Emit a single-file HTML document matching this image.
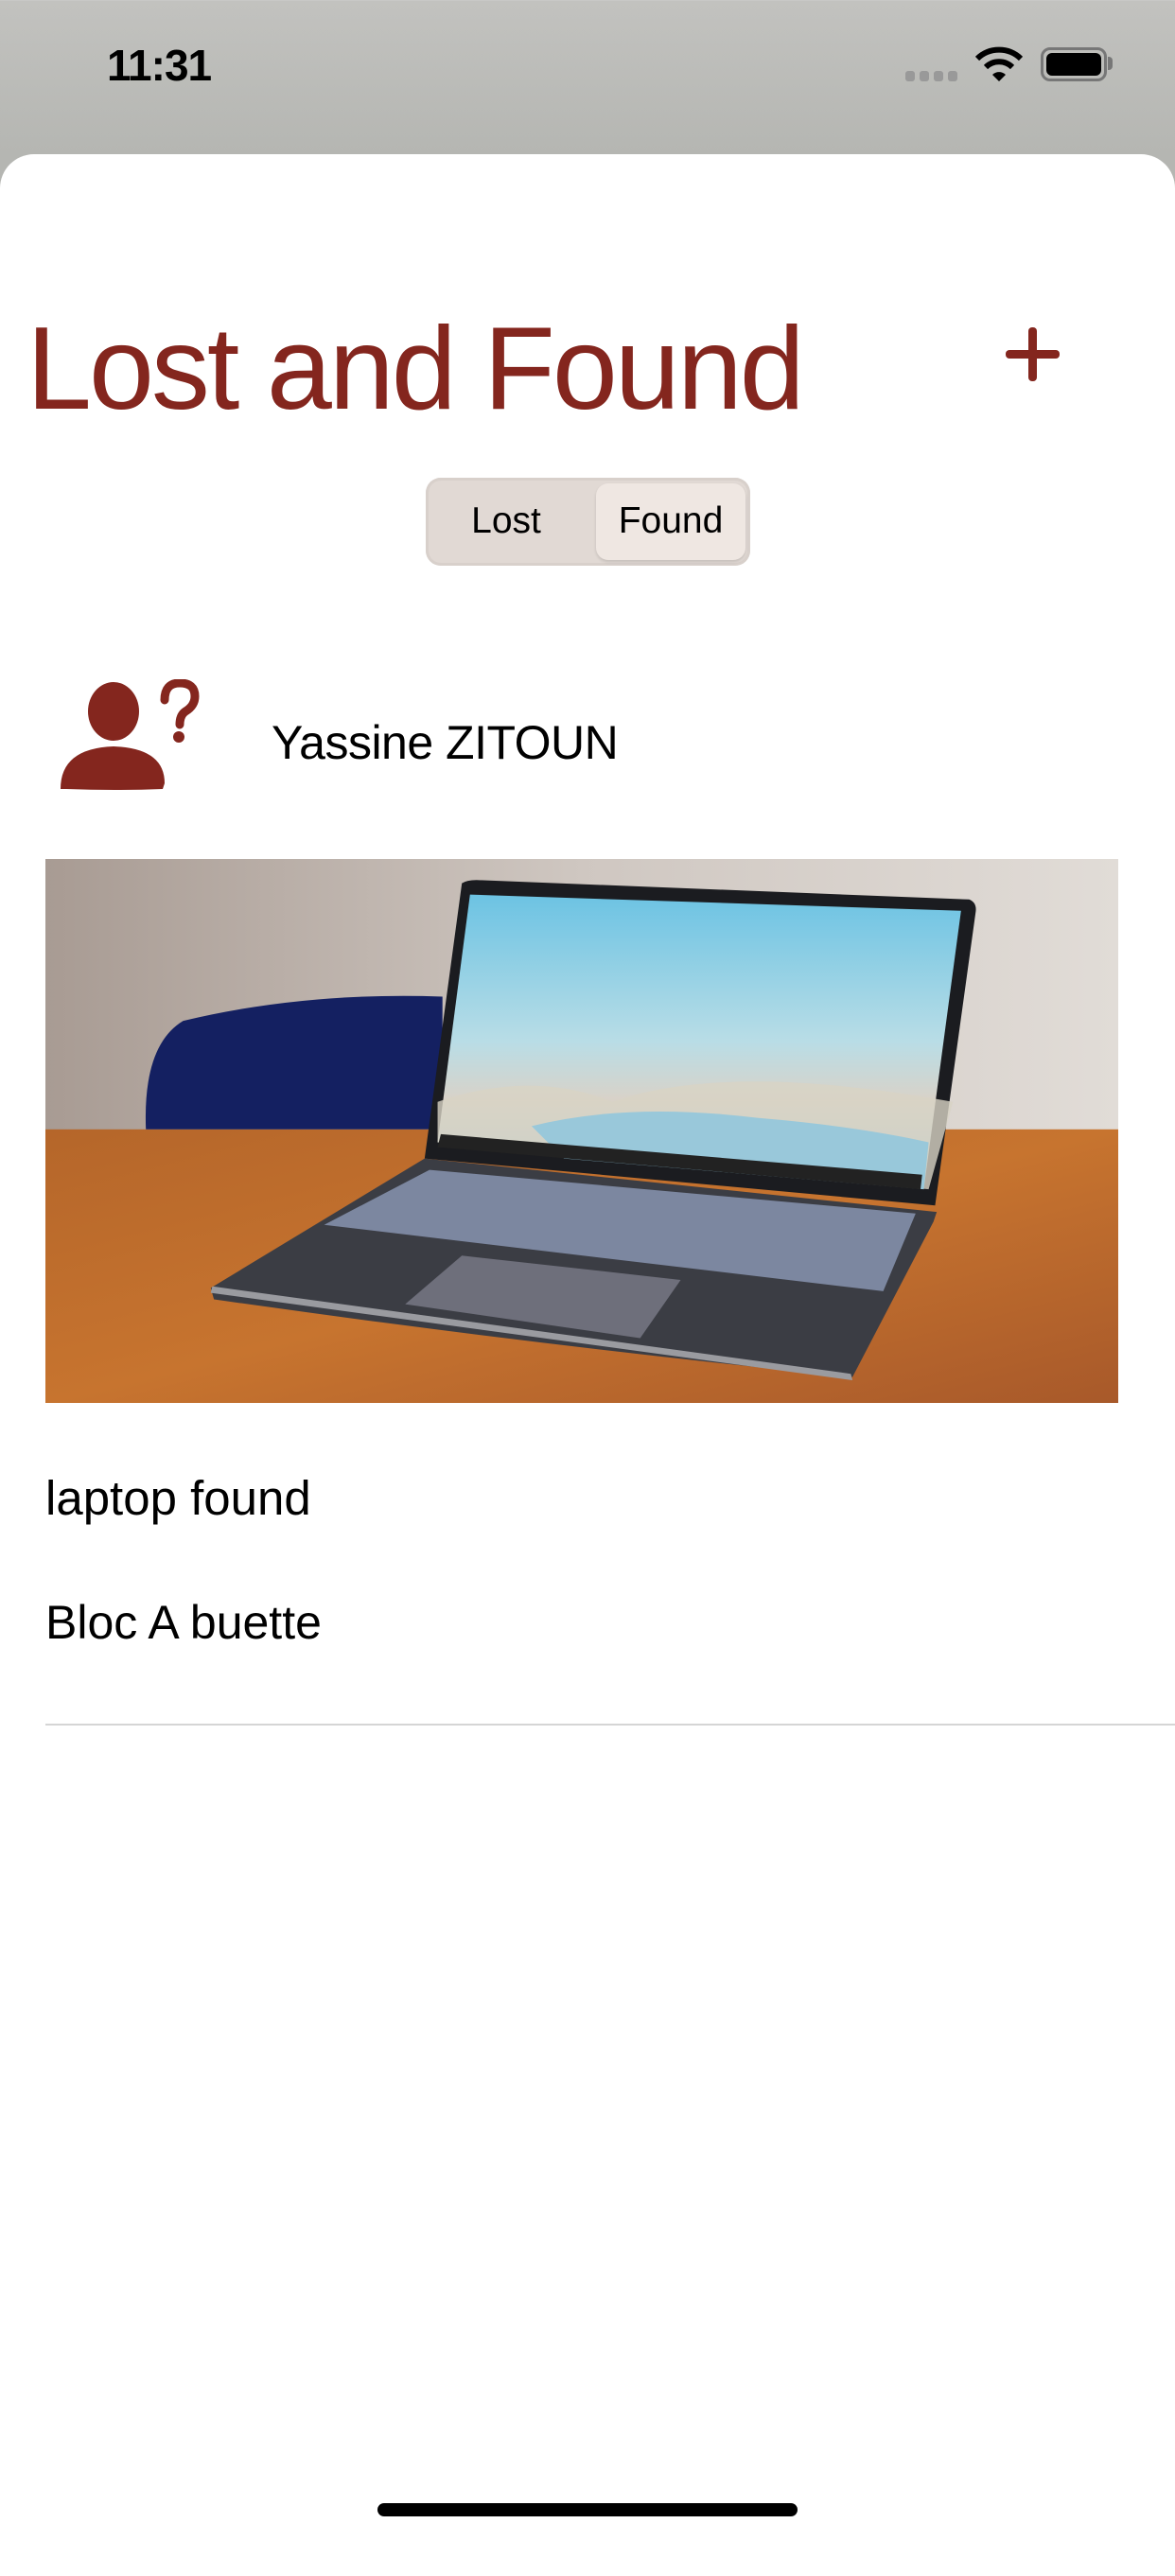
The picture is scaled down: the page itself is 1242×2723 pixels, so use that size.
<!DOCTYPE html>
<html><head><meta charset="utf-8"><style>
html,body{margin:0;padding:0;}
body{width:1242px;height:2688px;position:relative;overflow:hidden;background:linear-gradient(#c2c2bf,#b5b6b2 163px,#b5b6b2 220px,#fff 220px);font-family:"Liberation Sans",sans-serif;}
.abs{position:absolute;}
.sheet{left:0;top:163px;width:1242px;height:2560px;background:#fff;border-radius:36px 36px 0 0;}
</style></head><body>
<div class="abs" style="left:113px;top:42px;font-size:46px;font-weight:bold;letter-spacing:-1px;color:#000;">11:31</div>
<div class="abs" style="left:957px;top:75px;display:flex;gap:5px;">
<div style="width:10px;height:11px;border-radius:3px;background:#999"></div><div style="width:10px;height:11px;border-radius:3px;background:#999"></div><div style="width:10px;height:11px;border-radius:3px;background:#999"></div><div style="width:10px;height:11px;border-radius:3px;background:#999"></div></div>
<svg class="abs" style="left:1030px;top:48px" width="52" height="40" viewBox="0 0 52 40">
<path d="M3 14 A33 33 0 0 1 49 14" stroke="#000" stroke-width="6" fill="none"/>
<path d="M12 23 A20 20 0 0 1 40 23" stroke="#000" stroke-width="6" fill="none"/>
<path d="M19 31 L26 38 L33 31 A10 10 0 0 0 19 31Z" fill="#000"/></svg>
<div class="abs" style="left:1100px;top:50px;width:64px;height:30px;border:3px solid #777;border-radius:10px;"></div>
<div class="abs" style="left:1106px;top:56px;width:58px;height:24px;background:#000;border-radius:6px;"></div>
<div class="abs" style="left:1171px;top:60px;width:5px;height:14px;background:#777;border-radius:0 4px 4px 0;"></div>
<div class="abs sheet"></div>
<div class="abs" style="left:28px;top:328px;font-size:124px;color:#84261e;letter-spacing:-3px;line-height:1;white-space:nowrap;">Lost and Found</div>
<div class="abs" style="left:1063px;top:370px;width:57px;height:9px;background:#84261e;border-radius:4px;"></div>
<div class="abs" style="left:1087px;top:346px;width:9px;height:57px;background:#84261e;border-radius:4px;"></div>
<div class="abs" style="left:450px;top:505px;width:343px;height:93px;background:#e1d9d4;border-radius:16px;box-shadow:inset 0 0 0 3px #d8d0cb;"></div>
<div class="abs" style="left:630px;top:511px;width:158px;height:81px;background:#efe7e2;border-radius:13px;box-shadow:0 2px 3px rgba(0,0,0,.12);"></div>
<div class="abs" style="left:445px;top:529px;width:180px;text-align:center;font-size:39px;color:#000;">Lost</div>
<div class="abs" style="left:630px;top:529px;width:158px;text-align:center;font-size:39px;color:#000;">Found</div>
<svg class="abs" style="left:62px;top:718px" width="150" height="120" viewBox="0 0 150 120">
<ellipse cx="58" cy="34" rx="27" ry="31" fill="#84261e"/>
<path d="M2 116 Q2 73 58 71 Q112 73 112 110 L110 116 Q60 118 8 116 Z" fill="#84261e"/>
<path d="M112 22 Q112 4 128 4 Q144 4 144 18 Q144 28 134 34 Q128 38 128 48" stroke="#84261e" stroke-width="9" fill="none" stroke-linecap="round"/>
<circle cx="127" cy="61" r="6" fill="#84261e"/></svg>
<div class="abs" style="left:287px;top:756px;font-size:50px;color:#000;letter-spacing:-0.5px;">Yassine ZITOUN</div>
<svg class="abs" style="left:48px;top:908px" width="1134" height="575" viewBox="0 0 662 336" preserveAspectRatio="none">
<defs>
<linearGradient id="wall" x1="0" x2="1"><stop offset="0" stop-color="#a89b93"/><stop offset=".5" stop-color="#cfc7c1"/><stop offset="1" stop-color="#e1dcd7"/></linearGradient>
<linearGradient id="wood" x1="0" y1="0" x2="1" y2="1"><stop offset="0" stop-color="#b5662a"/><stop offset=".5" stop-color="#c7742f"/><stop offset="1" stop-color="#a8592a"/></linearGradient>
<linearGradient id="scr" x1="0" y1="0" x2="0" y2="1"><stop offset="0" stop-color="#6cc3e3"/><stop offset=".5" stop-color="#b9dde6"/><stop offset=".7" stop-color="#d9d2c8"/><stop offset="1" stop-color="#8fc7dd"/></linearGradient>
</defs>
<rect width="662" height="168" fill="url(#wall)"/>
<rect y="167" width="662" height="169" fill="url(#wood)"/>
<path d="M62 167 Q60 115 85 100 Q160 82 245 85 L245 167Z" fill="#142061"/>
<path d="M257 15 Q260 13 266 13 L570 25 Q575 27 574 33 L549 214 L234 185 Z" fill="#1b1c20"/>
<path d="M262 22 L565 32 L542 204 L242 175 Z" fill="url(#scr)"/>
<path d="M242 150 Q300 130 350 150 Q420 125 560 150 L545 204 L242 175 Z" fill="#d8d3c4" opacity=".8"/>
<path d="M300 165 Q360 150 440 160 Q500 165 545 175 L542 204 L320 185 Z" fill="#92c7dc" opacity=".9"/>
<path d="M244 170 L541 195 L540 204 L242 178Z" fill="#222"/>
<path d="M234 185 L550 218 L548 224 L498 320 Q300 300 104 272 L102 265 Z" fill="#3b3d44"/>
<path d="M102 268 L498 322 L497 318 L103 264Z" fill="#9a9ba0"/>
<path d="M237 192 L537 219 L517 267 L172 226 Z" fill="#7c87a0"/>
<path d="M257 245 L392 260 L367 296 L222 275 Z" fill="#6e6f7b"/>
</svg>
<div class="abs" style="left:48px;top:1554px;font-size:51px;color:#000;">laptop found</div>
<div class="abs" style="left:48px;top:1686px;font-size:50px;color:#000;">Bloc A buette</div>
<div class="abs" style="left:48px;top:1822px;width:1194px;height:2px;background:#d5d5d5;"></div>
<div class="abs" style="left:399px;top:2646px;width:444px;height:14px;background:#000;border-radius:7px;"></div>
</body></html>
